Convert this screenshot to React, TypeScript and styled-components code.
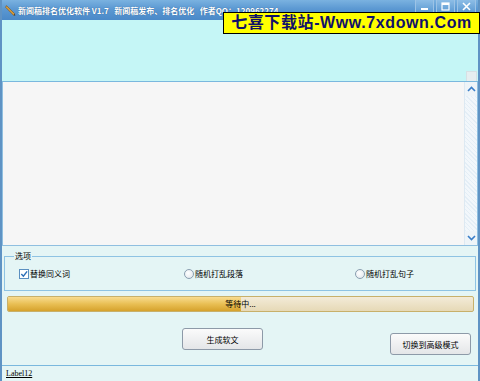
import { styled, createGlobalStyle } from "styled-components";

const Global = createGlobalStyle`
html, body {
  margin: 0;
  padding: 0;
  width: 480px;
  height: 381px;
  overflow: hidden;
  font-family: "Noto Sans CJK SC", "Liberation Sans", sans-serif;
}
`;

const App = () => {
  return (
    <Window>
      <Global />
      <TitleBar>
        <TitleIcon viewBox="0 0 16 16">
          <path d="M3 2 L13 12 L12 14 L2 4 Z" fill="#e8a83a" stroke="#7a4a10" strokeWidth="0.8" />
          <path d="M12 14 L14 14 L13 12 Z" fill="#333" />
        </TitleIcon>
        <TitleText>新闻稿排名优化软件 V1.7 &nbsp;&nbsp;新闻稿发布、排名优化 &nbsp;&nbsp;作者QQ：120962274</TitleText>
        <Controls>
          <Ctl>
            <svg width="9" height="9" viewBox="0 0 9 9"><rect x="1" y="6" width="7" height="2" fill="#fff" /></svg>
          </Ctl>
          <Ctl>
            <svg width="9" height="9" viewBox="0 0 9 9"><rect x="1" y="1" width="7" height="7" fill="none" stroke="#fff" strokeWidth="1.2" /><rect x="1" y="1" width="7" height="2" fill="#fff" /></svg>
          </Ctl>
          <Ctl>
            <svg width="9" height="9" viewBox="0 0 9 9"><path d="M1 1 L8 8 M8 1 L1 8" stroke="#fff" strokeWidth="1.6" /></svg>
          </Ctl>
        </Controls>
      </TitleBar>
      <Banner>七喜下载站-Www.7xdown.Com</Banner>
      <Client>
        <TopBox>
          <MiniScroll />
        </TopBox>
        <MainBox>
          <ScrollBar>
            <Arrow>
              <svg width="9" height="6" viewBox="0 0 9 6"><path d="M1 5 L4.5 1.5 L8 5" fill="none" stroke="#3a7ec8" strokeWidth="1.6" /></svg>
            </Arrow>
            <Track />
            <Arrow>
              <svg width="9" height="6" viewBox="0 0 9 6"><path d="M1 1 L4.5 4.5 L8 1" fill="none" stroke="#3a7ec8" strokeWidth="1.6" /></svg>
            </Arrow>
          </ScrollBar>
        </MainBox>
        <Lower>
          <Group>
            <Legend>选项</Legend>
            <Option $w={165}>
              <Check>
                <svg width="8" height="8" viewBox="0 0 9 9"><path d="M1.5 4.5 L3.8 7 L8 1.5" fill="none" stroke="#2a6fb8" strokeWidth="1.6" /></svg>
              </Check>
              替换同义词
            </Option>
            <Option $w={171}>
              <Radio />
              随机打乱段落
            </Option>
            <Option $w={100}>
              <Radio />
              随机打乱句子
            </Option>
          </Group>
          <Progress>
            <Fill style={{ width: "50%" }} />
            <ProgressText>等待中...</ProgressText>
          </Progress>
          <Buttons>
            <Button $mt={0} $w={81}>生成软文</Button>
            <Button $mt={5} $w={81}>切换到高级模式</Button>
          </Buttons>
        </Lower>
        <StatusBar>
          <StatusLabel>Label12</StatusLabel>
        </StatusBar>
      </Client>
    </Window>
  );
};

export default App;

const Window = styled.div`
position: relative;
width: 480px;
height: 381px;
display: flex;
flex-direction: column;
background: #e4f5f5;
border-left: 2px solid #5f93c4;
border-right: 2px solid #5f93c4;
box-sizing: border-box;
`;

const TitleBar = styled.div`
height: 20px;
display: flex;
align-items: center;
padding-left: 2px;
background: linear-gradient(to bottom, #7ab2e0 0%, #5b98d2 45%, #4a89c8 100%);
`;

const TitleIcon = styled.svg`
width: 13px;
height: 13px;
flex: none;
`;

const TitleText = styled.div`
margin-left: 1px;
color: #fff;
font-size: 8px;
font-weight: 700;
white-space: nowrap;
overflow: hidden;
flex: 1;
text-shadow: 0 0 1px #1f4f80;
`;

const Controls = styled.div`
display: flex;
gap: 2px;
margin-right: 2px;
align-self: flex-start;
`;

const Ctl = styled.div`
width: 17px;
height: 12px;
display: flex;
align-items: center;
justify-content: center;
border: 1px solid #9cc3e6;
border-top: none;
background: linear-gradient(to bottom, #8dbde6, #5e9bd3);
`;

const Banner = styled.div`
position: absolute;
left: 221px;
top: 12px;
width: 257px;
height: 22px;
box-sizing: border-box;
background: #ffff00;
border: 1px solid #000;
color: #10106a;
font-family: "Liberation Sans", "Noto Sans CJK SC", sans-serif;
font-weight: 700;
font-size: 16px;
line-height: 20px;
text-align: center;
white-space: nowrap;
letter-spacing: 0.6px;
`;

const Client = styled.div`
flex: 1;
display: flex;
flex-direction: column;
`;

const TopBox = styled.div`
height: 61px;
background: #c5f6f6;
border-bottom: 1px solid #7ab8de;
display: flex;
justify-content: flex-end;
align-items: flex-end;
`;

const MiniScroll = styled.div`
width: 9px;
height: 9px;
margin-right: 1px;
background: #e6eef0;
border: 1px solid #d6e0e4;
border-bottom: none;
`;

const MainBox = styled.div`
height: 163px;
background: #f6f6f6;
border: 1px solid #8fbfe0;
border-top: none;
display: flex;
justify-content: flex-end;
`;

const ScrollBar = styled.div`
width: 12px;
display: flex;
flex-direction: column;
background: #eef4f8;
border-left: 1px solid #dde9f2;
`;

const Arrow = styled.div`
height: 14px;
display: flex;
align-items: center;
justify-content: center;
`;

const Track = styled.div`
flex: 1;
background: repeating-linear-gradient(45deg, #e4eef6 0 1px, #f2f7fb 1px 3px);
`;

const Lower = styled.div`
padding: 0 2px 0 2px;
display: flex;
flex-direction: column;
`;

const Group = styled.div`
position: relative;
margin-top: 10px;
height: 33px;
border: 1px solid #8ec3e3;
display: flex;
align-items: center;
padding-left: 14px;
`;

const Legend = styled.div`
position: absolute;
left: 9px;
top: -7px;
padding: 0 1px;
background: #e4f5f5;
font-size: 8px;
line-height: 12px;
color: #000;
`;

const Option = styled.div`
width: ${(p) => p.$w}px;
display: flex;
align-items: center;
gap: 1px;
font-size: 8px;
color: #000;
white-space: nowrap;
`;

const Check = styled.div`
width: 8px;
height: 8px;
border: 1px solid #5b8fc0;
background: #fff;
display: flex;
align-items: center;
justify-content: center;
`;

const Radio = styled.div`
width: 8px;
height: 8px;
border-radius: 50%;
border: 1px solid #8a9eb0;
background: radial-gradient(circle at 40% 40%, #ffffff, #dde4ea);
`;

const Progress = styled.div`
position: relative;
margin: 5px 2px 0 3px;
height: 16px;
box-sizing: border-box;
border: 1px solid #c8b06a;
border-radius: 2px;
background: linear-gradient(to bottom, #f3ebd8, #e6d9b6);
overflow: hidden;
`;

const Fill = styled.div`
height: 100%;
background: linear-gradient(to bottom, #f8dc90 0%, #e9bf54 50%, #d6a22c 100%);
`;

const ProgressText = styled.div`
position: absolute;
inset: 0;
text-align: center;
font-size: 8px;
line-height: 14px;
color: #000;
`;

const Buttons = styled.div`
height: 53px;
display: flex;
align-items: flex-start;
padding-top: 16px;
box-sizing: border-box;
padding-left: 178px;
gap: 127px;
`;

const Button = styled.div`
width: ${(p) => p.$w}px;
height: 22px;
margin-top: ${(p) => p.$mt}px;
box-sizing: border-box;
border: 1px solid #8d9aa8;
border-radius: 3px;
background: linear-gradient(to bottom, #fbfbfb, #e4e6e8);
display: flex;
align-items: center;
justify-content: center;
font-size: 8px;
color: #000;
white-space: nowrap;
`;

const StatusBar = styled.div`
flex: 1;
border-top: 1px solid #7ab8de;
display: flex;
align-items: center;
padding-left: 4px;
`;

const StatusLabel = styled.div`
font-family: "Liberation Serif", serif;
font-size: 8px;
text-decoration: underline;
color: #000;
`;
